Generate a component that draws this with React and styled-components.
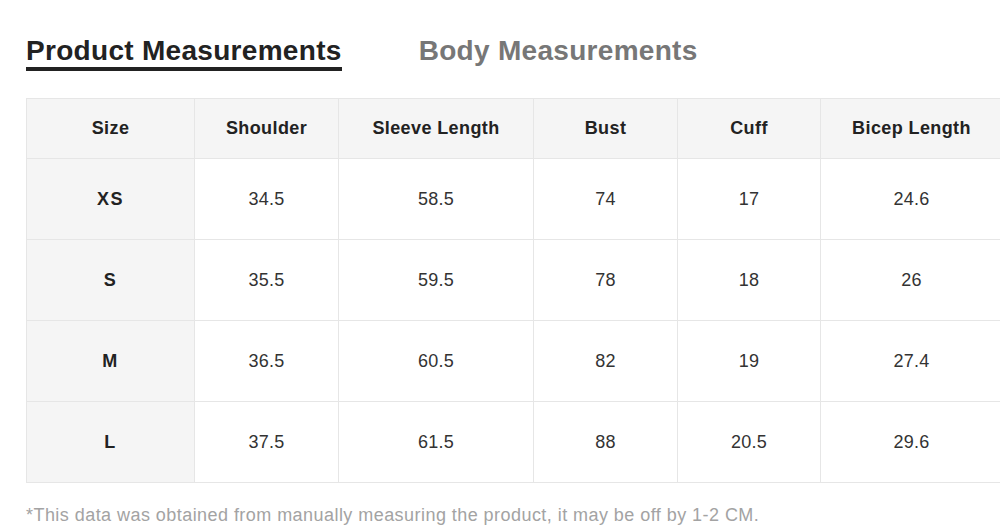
import styled, { createGlobalStyle } from "styled-components";

const GlobalStyle = createGlobalStyle`
  html, body {
    margin: 0;
    padding: 0;
    background: #fff;
    overflow: hidden;
  }
  body {
    font-family: "Liberation Sans", Arial, sans-serif;
  }
`;

const Page = styled.div`
  width: 1000px;
  height: 531px;
  padding: 35px 0 0 26px;
  box-sizing: border-box;
  overflow: hidden;
`;

const Tabs = styled.div`
  display: flex;
  gap: 77px;
`;

const Tab = styled.div`
  font-size: 28px;
  font-weight: 700;
  line-height: 32px;
  letter-spacing: 0.3px;
  color: ${({ $active }) => ($active ? "#222" : "#777")};
  border-bottom: 4px solid ${({ $active }) => ($active ? "#222" : "transparent")};
  cursor: pointer;
  white-space: nowrap;
`;

const Table = styled.table`
  margin-top: 27px;
  border-collapse: collapse;
  table-layout: fixed;
  width: ${({ $width }) => $width}px;
  border: 1px solid #e6e6e6;
`;

const HeadCell = styled.th`
  height: 59px;
  padding: 0;
  background: #f5f5f5;
  border: 1px solid #e6e6e6;
  font-size: 18px;
  font-weight: 700;
  letter-spacing: 0.4px;
  color: #222;
  text-align: center;
  vertical-align: middle;
  white-space: nowrap;
`;

const Cell = styled.td`
  height: 80px;
  padding: 0;
  border: 1px solid #e6e6e6;
  background: ${({ $size }) => ($size ? "#f5f5f5" : "#fff")};
  font-size: 18px;
  font-weight: ${({ $size }) => ($size ? 700 : 400)};
  letter-spacing: ${({ $size }) => ($size ? "1.5px" : "0.2px")};
  color: ${({ $size }) => ($size ? "#222" : "#333")};
  text-align: center;
  vertical-align: middle;
`;

const Note = styled.p`
  margin: 22px 0 0;
  font-size: 18px;
  line-height: 20px;
  letter-spacing: 0.45px;
  color: #a3a3a3;
  white-space: nowrap;
`;

const columns = [
  { title: "Size", width: 168 },
  { title: "Shoulder", width: 144 },
  { title: "Sleeve Length", width: 195 },
  { title: "Bust", width: 144 },
  { title: "Cuff", width: 143 },
  { title: "Bicep Length", width: 182 },
];

const tableWidth = columns.reduce((sum, c) => sum + c.width, 0);

const rows = [
  ["XS", "34.5", "58.5", "74", "17", "24.6"],
  ["S", "35.5", "59.5", "78", "18", "26"],
  ["M", "36.5", "60.5", "82", "19", "27.4"],
  ["L", "37.5", "61.5", "88", "20.5", "29.6"],
];

export default function App() {
  return (
    <>
      <GlobalStyle />
      <Page>
        <Tabs>
          <Tab $active>Product Measurements</Tab>
          <Tab>Body Measurements</Tab>
        </Tabs>
        <Table $width={tableWidth}>
          <colgroup>
            {columns.map((c) => (
              <col key={c.title} style={{ width: c.width }} />
            ))}
          </colgroup>
          <thead>
            <tr>
              {columns.map((c) => (
                <HeadCell key={c.title}>{c.title}</HeadCell>
              ))}
            </tr>
          </thead>
          <tbody>
            {rows.map((row) => (
              <tr key={row[0]}>
                {row.map((v, i) => (
                  <Cell key={i} $size={i === 0}>
                    {v}
                  </Cell>
                ))}
              </tr>
            ))}
          </tbody>
        </Table>
        <Note>
          *This data was obtained from manually measuring the product, it may be off by 1-2 CM.
        </Note>
      </Page>
    </>
  );
}
